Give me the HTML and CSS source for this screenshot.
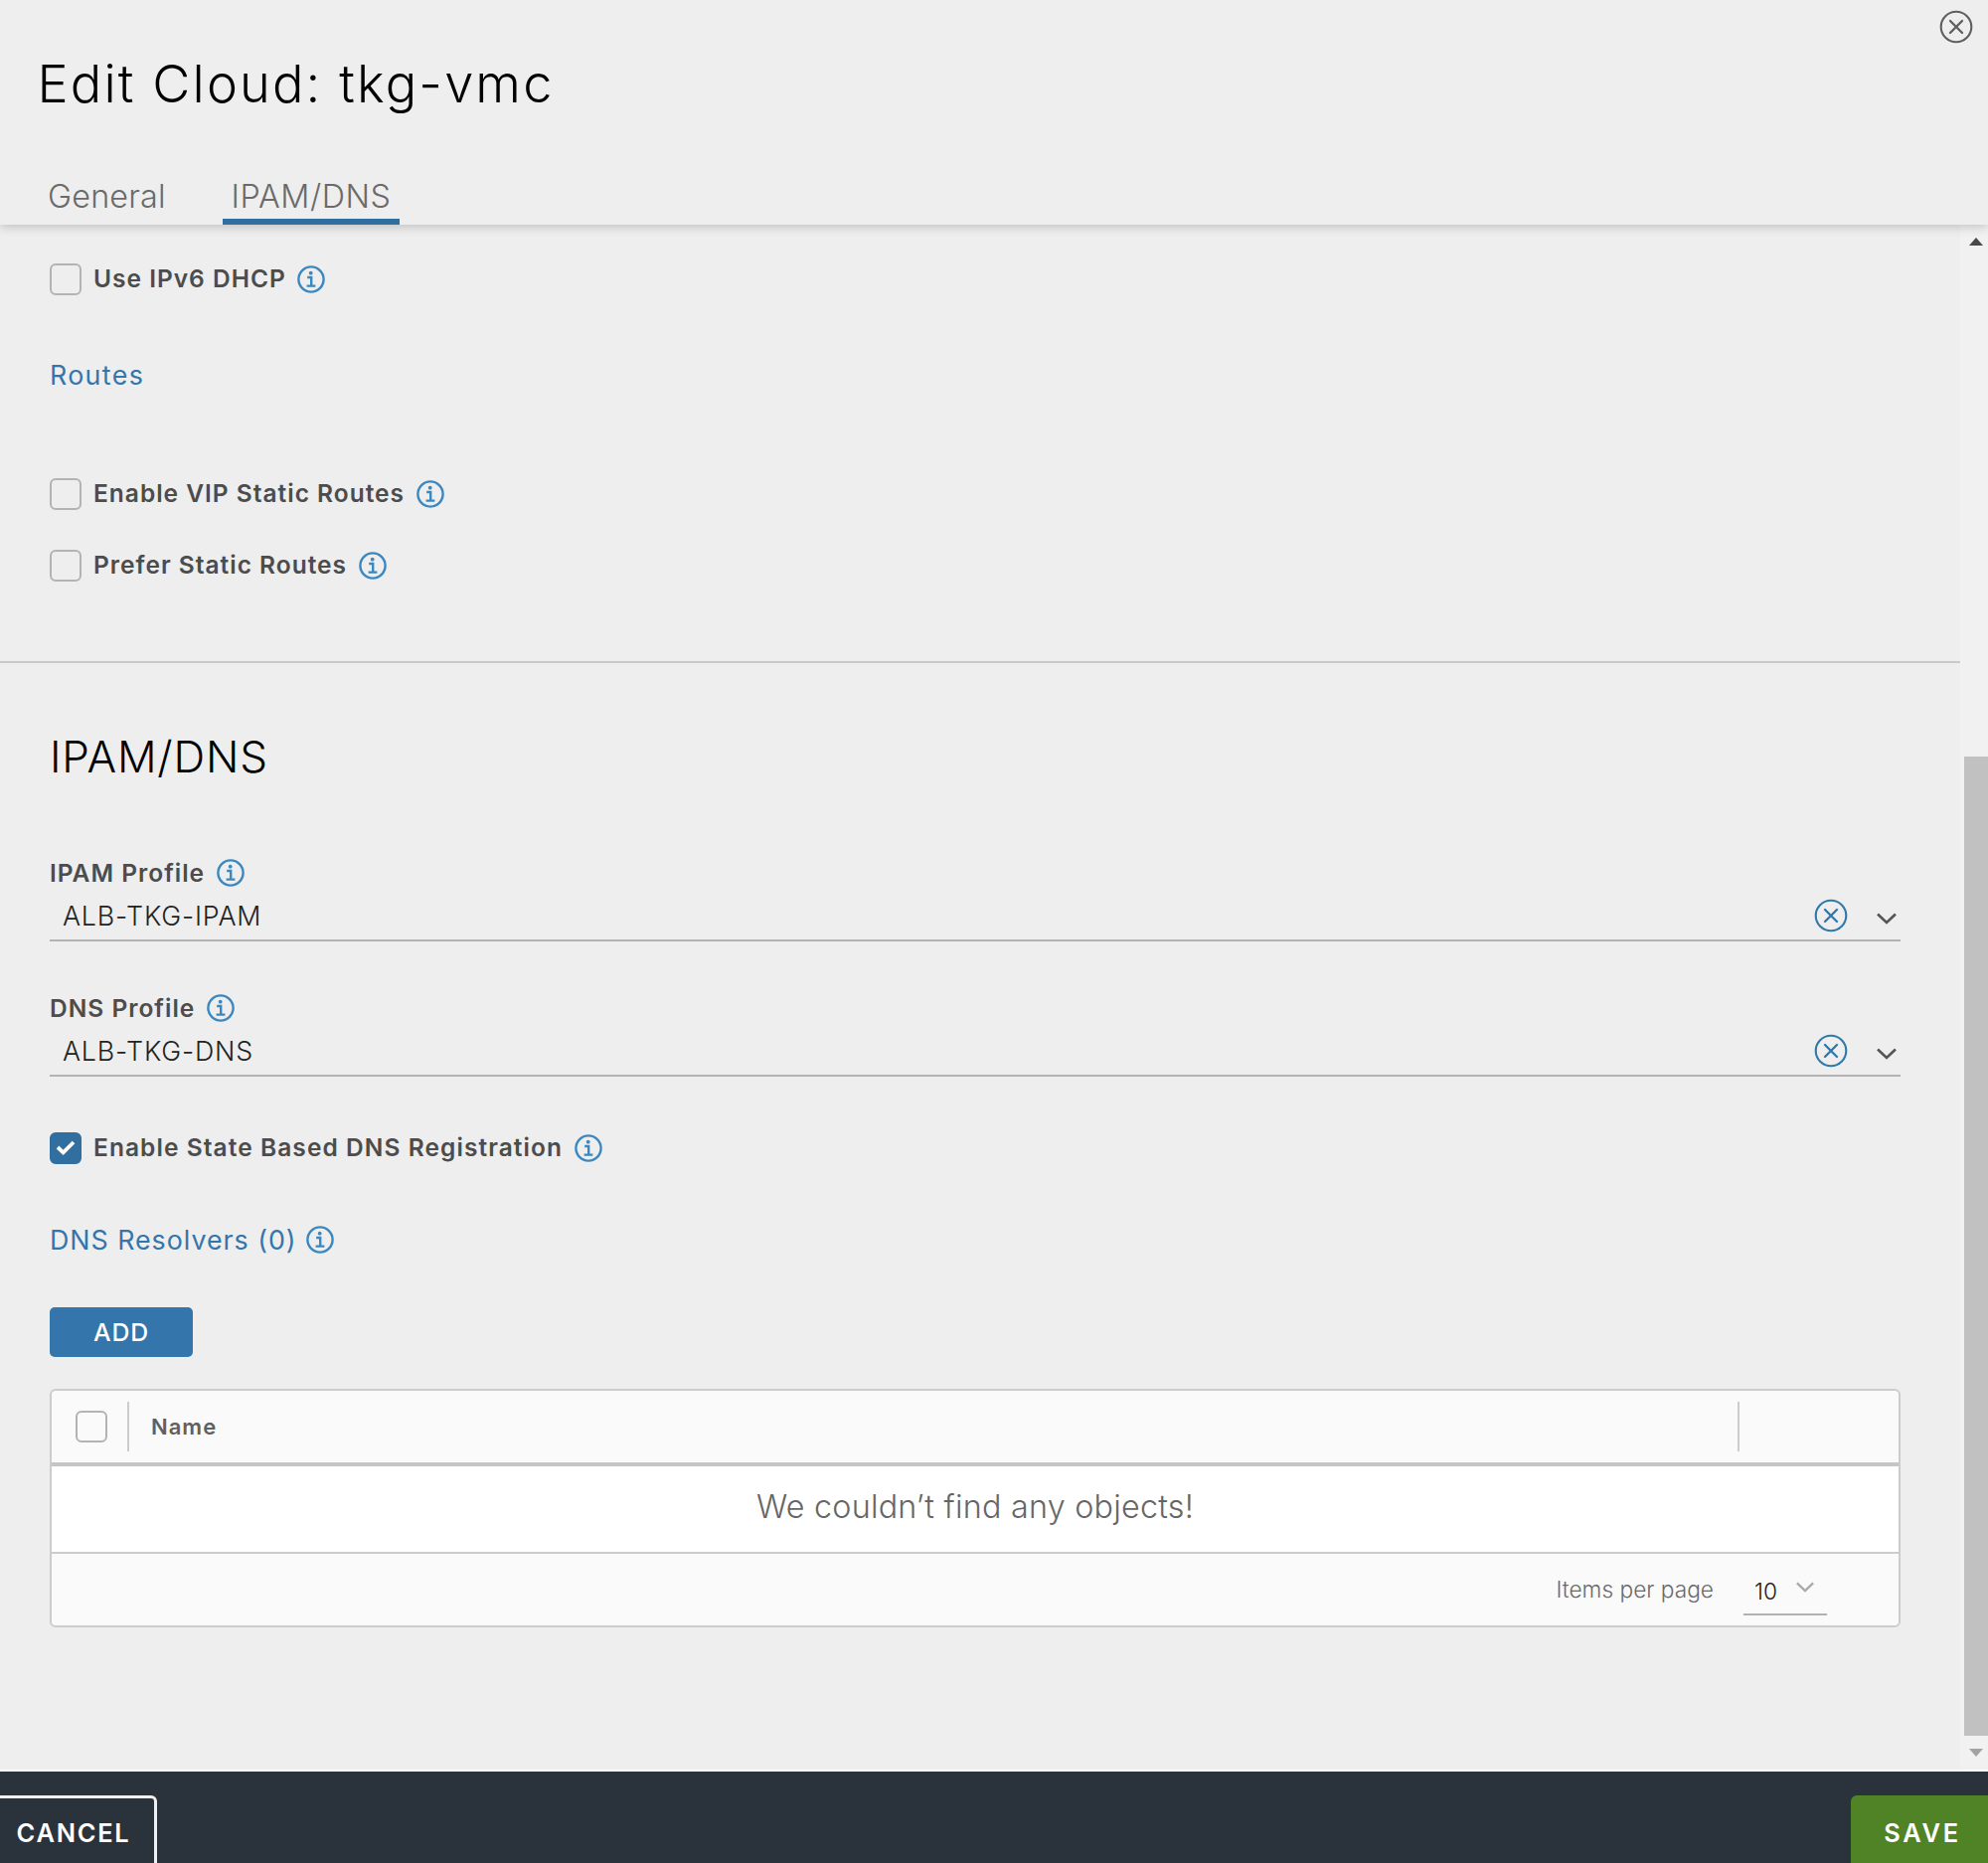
FILE: index.html
```
<!DOCTYPE html>
<html lang="en">
<head>
<meta charset="utf-8">
<title>Edit Cloud: tkg-vmc</title>
<link rel="stylesheet" href="styles.css">
</head>
<body>
<svg class="defs" aria-hidden="true">
  <symbol id="info" viewBox="0 0 28 28">
    <circle cx="14" cy="14" r="12.6" fill="none" stroke="currentColor" stroke-width="2.4"/>
    <circle cx="13.7" cy="7.7" r="1.9" fill="currentColor"/>
    <path d="M10.2 12h4v8.6M9.6 20.6h8.8" fill="none" stroke="currentColor" stroke-width="2.4"/>
  </symbol>
  <symbol id="clear" viewBox="0 0 34 34">
    <circle cx="17" cy="17" r="15.3" fill="none" stroke="currentColor" stroke-width="2.1"/>
    <path d="M11 11l12 12M23 11L11 23" fill="none" stroke="currentColor" stroke-width="2.3" stroke-linecap="round"/>
  </symbol>
  <symbol id="chevron" viewBox="0 0 20 12">
    <path d="M1 1.5l9 8.5 9-8.5" fill="none" stroke="currentColor" stroke-width="2.6"/>
  </symbol>
</svg>

<div class="modal">
  <header class="header">
    <div class="title-row">
      <h1 class="title">Edit Cloud: tkg-vmc</h1>
      <button class="close" aria-label="Close"><svg width="34" height="34"><use href="#clear"/></svg></button>
    </div>
    <nav class="tabs">
      <a class="tab general">General</a>
      <a class="tab active">IPAM/DNS</a>
    </nav>
  </header>

  <div class="viewport">
    <main class="content">
      <section class="routes">
        <div class="check-row"><span class="checkbox"></span><span class="label">Use IPv6 DHCP</span><svg class="info"><use href="#info"/></svg></div>
        <h3 class="subhead">Routes</h3>
        <div class="check-row vip"><span class="checkbox"></span><span class="label">Enable VIP Static Routes</span><svg class="info"><use href="#info"/></svg></div>
        <div class="check-row prefer"><span class="checkbox"></span><span class="label">Prefer Static Routes</span><svg class="info"><use href="#info"/></svg></div>
      </section>

      <section class="ipam">
        <h2 class="section-title">IPAM/DNS</h2>

        <div class="field">
          <div class="field-label"><span class="label">IPAM Profile</span><svg class="info"><use href="#info"/></svg></div>
          <div class="select">
            <span class="value">ALB-TKG-IPAM</span>
            <svg class="clear"><use href="#clear"/></svg>
            <svg class="chevron"><use href="#chevron"/></svg>
          </div>
        </div>

        <div class="field">
          <div class="field-label"><span class="label">DNS Profile</span><svg class="info"><use href="#info"/></svg></div>
          <div class="select">
            <span class="value">ALB-TKG-DNS</span>
            <svg class="clear"><use href="#clear"/></svg>
            <svg class="chevron"><use href="#chevron"/></svg>
          </div>
        </div>

        <div class="check-row">
          <span class="checkbox checked"><svg width="20" height="16" viewBox="0 0 20 16"><path d="M2 7l5.6 5.3L18 2" fill="none" stroke="#fff" stroke-width="3.8"/></svg></span>
          <span class="label wide">Enable State Based DNS Registration</span><svg class="info"><use href="#info"/></svg>
        </div>

        <h3 class="subhead resolvers">DNS Resolvers (0)<svg class="info"><use href="#info"/></svg></h3>

        <button class="add">ADD</button>

        <div class="grid">
          <div class="grid-head">
            <div class="cell-check"><span class="checkbox"></span></div>
            <div class="cell-name">Name</div>
            <div class="cell-actions"></div>
          </div>
          <div class="grid-body">We couldn’t find any objects!</div>
          <div class="grid-foot">
            <span class="per-page">Items per page</span>
            <span class="page-size">10<svg class="mini-chevron"><use href="#chevron"/></svg></span>
          </div>
        </div>
      </section>
    </main>

    <div class="scrollbar">
      <span class="arrow up"></span>
      <span class="thumb"></span>
      <span class="arrow down"></span>
    </div>
  </div>

  <footer class="footer">
    <button class="cancel">CANCEL</button>
    <button class="save">SAVE</button>
  </footer>
</div>
</body>
</html>
```
FILE: styles.css
```
* { box-sizing: border-box; }

body {
  margin: 0;
  background: #eee;
  font-family: Inter, "Liberation Sans", sans-serif;
  color: #454545;
}

h1, h2, h3 { margin: 0; }
button { font-family: inherit; border: 0; padding: 0; }
svg { display: block; flex: none; }
.defs { position: absolute; width: 0; height: 0; }

.modal {
  display: flex;
  flex-direction: column;
  width: 2000px;
  height: 1874px;
  overflow: hidden;
}

/* Header */
.header {
  position: relative;
  z-index: 1;
  height: 226px;
  flex: none;
  display: flex;
  flex-direction: column;
  justify-content: space-between;
  background: #eee;
  box-shadow: 0 2px 10px rgba(0, 0, 0, .2);
}
.title-row {
  display: flex;
  justify-content: space-between;
  padding: 10px 15px 0 37.5px;
}
.title {
  padding-top: 44px;
  font-size: 52.3px;
  font-weight: 300;
  line-height: 60px;
  letter-spacing: 2.14px;
  color: #000;
}
.close {
  width: 34px;
  height: 34px;
  background: none;
  color: #5e5e5e;
}
.tabs { display: flex; padding-left: 38px; gap: 46px; }
.tab {
  height: 56px;
  border-bottom: 6px solid transparent;
  font-size: 32.3px;
  font-weight: 300;
  line-height: 56px;
  letter-spacing: .55px;
  color: #6a6a6a;
}
.general { width: 140px; padding-left: 10px; letter-spacing: .2px; }
.active { width: 178px; padding-left: 8.5px; border-color: #306fa0; }

/* Scrolling area */
.viewport { flex: none; height: 1556px; display: flex; border-bottom: 2px solid #fff; }
.content { width: 1972px; }
.routes {
  height: 441px;
  padding: 35px 0 0 50px;
  border-bottom: 2px solid #c9c9c9;
}
.ipam { padding: 64px 60px 0 50px; }

.check-row { display: flex; align-items: center; height: 40px; }
.checkbox {
  flex: none;
  display: flex;
  align-items: center;
  justify-content: center;
  width: 32px;
  height: 32px;
  border: 2px solid #b3b3b3;
  border-radius: 6px;
}
.checked { background: #306fa0; border-color: #306fa0; }
.label {
  font-size: 24.5px;
  font-weight: 600;
  line-height: 30px;
  letter-spacing: 1px;
  color: #4c4c4c;
}
.label.wide { letter-spacing: 1.07px; }
.check-row .label { margin: -2px 0 0 12px; }
.info { width: 28px; height: 28px; margin-left: 11.5px; color: #3b87c0; }

.subhead {
  display: flex;
  align-items: center;
  height: 40px;
  margin-top: 56px;
  font-size: 26.8px;
  font-weight: 400;
  letter-spacing: 1.35px;
  color: #3475ab;
}
.resolvers { margin-top: 52px; letter-spacing: .98px; }
.resolvers .info { margin-left: 9.5px; }
.vip { margin-top: 80px; }
.prefer { margin-top: 32px; }

.section-title {
  height: 60px;
  margin-bottom: 72px;
  font-size: 44px;
  font-weight: 300;
  line-height: 60px;
  letter-spacing: .8px;
  color: #000;
}

/* Select fields */
.field { width: 1862px; margin-bottom: 52px; }
.field-label { display: flex; align-items: center; height: 30px; }
.field-label .info { margin-left: 12px; }
.select {
  display: flex;
  align-items: center;
  height: 54px;
  padding: 4px 4px 0 13px;
  border-bottom: 2px solid #b3b3b3;
}
.value {
  flex: 1;
  font-size: 26.8px;
  font-weight: 300;
  line-height: 34px;
  letter-spacing: .83px;
  color: #222;
}
.clear { width: 34px; height: 34px; color: #2f78a8; }
.chevron { width: 20px; height: 12px; margin: 6px 0 0 29px; color: #565656; }

.add {
  display: block;
  width: 144px;
  height: 50px;
  margin-top: 48px;
  border-radius: 5px;
  background: #3475ab;
  color: #fff;
  font-size: 24.8px;
  font-weight: 500;
  letter-spacing: .8px;
}

/* Data grid */
.grid {
  width: 1862px;
  margin-top: 32px;
  border: 2px solid #ccc;
  border-radius: 6px;
  background: #fafafa;
  overflow: hidden;
}
.grid-head {
  display: flex;
  align-items: center;
  height: 76px;
  border-bottom: 4px solid #c5c5c5;
}
.cell-check {
  display: flex;
  align-items: center;
  width: 78px;
  height: 50px;
  padding-left: 24px;
  border-right: 2px solid #ccc;
}
.cell-name {
  flex: 1;
  padding-left: 22px;
  font-size: 22px;
  font-weight: 600;
  letter-spacing: 1px;
  color: #606060;
}
.cell-actions { width: 162px; height: 50px; border-left: 2px solid #ccc; }
.grid-body {
  height: 88px;
  border-bottom: 2px solid #ccc;
  background: #fff;
  font-size: 32.3px;
  font-weight: 300;
  line-height: 81px;
  letter-spacing: .24px;
  text-align: center;
  color: #666;
}
.grid-foot {
  display: flex;
  justify-content: flex-end;
  align-items: flex-start;
  height: 72px;
  padding-right: 72px;
  font-size: 22.7px;
  line-height: 30px;
}
.per-page { margin: 21px 30px 0 0; font-weight: 300; color: #6a6a6a; }
.page-size {
  display: flex;
  width: 84px;
  height: 62px;
  padding: 23px 0 0 11px;
  border-bottom: 2px solid #b3b3b3;
  font-weight: 300;
  color: #222;
}
.mini-chevron { width: 18px; height: 11px; margin: 5px 0 0 19px; color: #aaa; }

/* Scrollbar */
.scrollbar {
  display: flex;
  flex-direction: column;
  width: 28px;
  padding: 13px 0 13px 4px;
  background: #f1f1f1;
}
.arrow { width: 0; height: 0; margin-left: 5px; border: 0 solid transparent; border-width: 0 7.5px; }
.up { border-bottom: 8px solid #484848; margin-bottom: 514px; }
.thumb { height: 985px; background: #c1c1c1; }
.down { border-top: 8px solid #a3a3a3; margin-top: 13px; }

/* Footer */
.footer {
  flex: 1;
  display: flex;
  justify-content: space-between;
  padding-top: 24px;
  background: #2a323b;
}
.cancel, .save {
  height: 80px;
  padding-bottom: 5px;
  color: #fff;
  font-size: 25.4px;
  font-weight: 600;
}
.cancel {
  width: 168px;
  margin-left: -10px;
  border: 3px solid #f0f0f0;
  border-radius: 6px;
  background: transparent;
  letter-spacing: 1.75px;
}
.save {
  width: 150px;
  margin-right: -12px;
  padding-right: 6px;
  border-radius: 6px;
  background: #508325;
  letter-spacing: 2.7px;
}
```
